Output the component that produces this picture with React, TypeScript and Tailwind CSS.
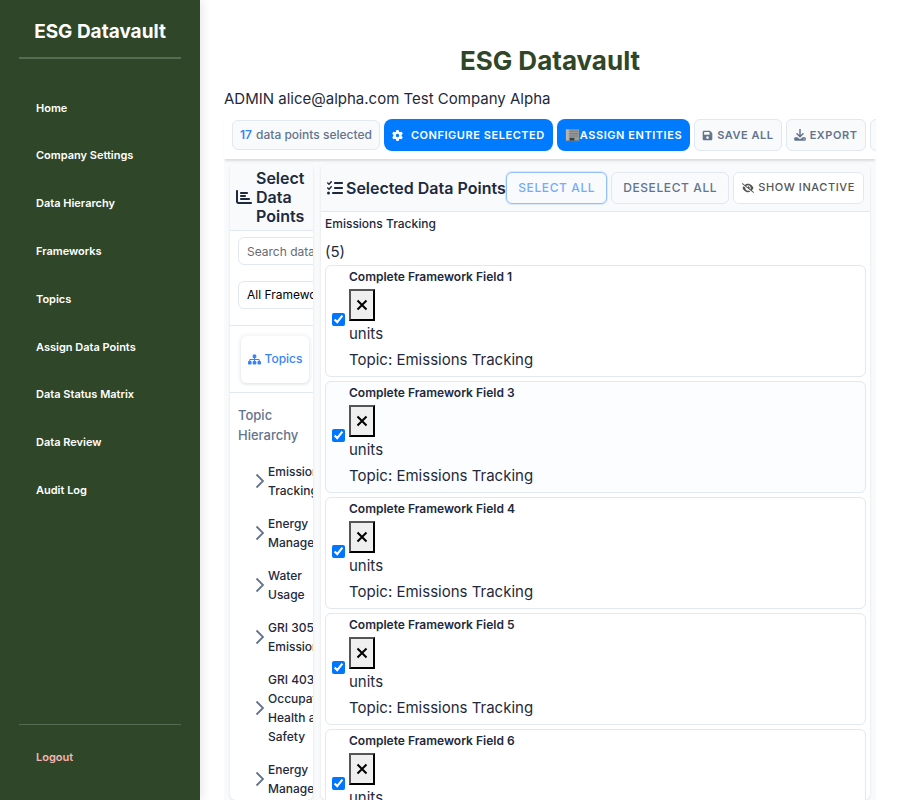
import type { ReactNode } from "react";
import {
  FaChartBar,
  FaEyeSlash,
  FaFloppyDisk,
  FaGear,
  FaListCheck,
  FaSitemap,
  FaUpload,
} from "react-icons/fa6";

const navItems = [
  "Home",
  "Company Settings",
  "Data Hierarchy",
  "Frameworks",
  "Topics",
  "Assign Data Points",
  "Data Status Matrix",
  "Data Review",
  "Audit Log",
];

const topics = [
  "Emissions Tracking",
  "Energy Management",
  "Water Usage",
  "GRI 305: Emissions",
  "GRI 403: Occupational Health and Safety",
  "Energy Management",
];

const fields = [1, 3, 4, 5, 6];

function Sidebar() {
  return (
    <aside className="flex w-[200px] shrink-0 flex-col bg-[#2f4728] px-[19px] text-[11px] font-semibold text-white shadow-[2px_0_10px_rgba(0,0,0,0.1)]">
      <div className="flex h-[59px] items-center justify-center border-b-2 border-white/20 pt-[6px] text-[19px] leading-6 font-bold">
        ESG Datavault
      </div>
      <nav className="flex h-[455px] flex-col pt-[25px]">
        {navItems.map((item) => (
          <a key={item} href="#" className="flex flex-1 items-center pl-[17px]">
            {item}
          </a>
        ))}
      </nav>
      <div className="mt-auto border-t border-white/20 pb-[19px]">
        <a href="#" className="mt-2 flex h-12 items-center pl-[17px] text-[#f8b4b4]">
          Logout
        </a>
      </div>
    </aside>
  );
}

function GhostButton({ icon, children }: { icon: ReactNode; children: ReactNode }) {
  return (
    <button className="flex h-8 shrink-0 items-center gap-1 rounded-md border border-[#e2e8f0] bg-[#f8fafc] px-[7px] text-[11px] font-semibold tracking-wider text-[#64748b] uppercase">
      {icon}
      {children}
    </button>
  );
}

function DownloadIcon() {
  return (
    <svg width="12" height="12" viewBox="0 0 12 12" aria-hidden="true">
      <path d="M6 .5v7M3 4.800 6 7.800l3-3" fill="none" stroke="currentColor" strokeWidth="1.500" strokeLinecap="round" />
      <path
        d="M1.500 8.200h1.800L6 10.200l2.700-2h1.800c.8 0 1.300.5 1.300 1.200v1c0 .8-.5 1.300-1.300 1.300h-9C.7 11.700.2 11.200.2 10.400v-1c0-.7.5-1.200 1.300-1.200z"
        fill="currentColor"
      />
      <circle cx="10" cy="10" r=".6" fill="#f8fafc" />
    </svg>
  );
}

function BuildingIcon() {
  return (
    <svg width="15" height="14" viewBox="0 0 16 14" aria-hidden="true">
      <path d="M1 1h14v12H1z" fill="#9a9a98" />
      <path d="M1 1h3v12H1z" fill="#b9b5ae" />
      <path d="M5 3h9M5 5.500h9M5 8h9" stroke="#74818c" strokeWidth="1.200" />
      <path d="M5 10h5v3H5z" fill="#3c3f42" />
      <path d="M0 13h16v1H0z" fill="#77706a" />
    </svg>
  );
}

function Toolbar() {
  return (
    <div className="relative z-10 shrink-0 bg-white shadow-[0_3px_2px_-1px_rgba(0,0,0,0.12)]">
      <div className="flex h-12 items-center gap-1 overflow-hidden pl-2">
        <div className="flex h-[30px] shrink-0 items-center gap-1 rounded-md border border-[#e2e8f0] bg-[#f8fafc] px-[7px] text-xs font-medium text-[#64748b]">
          <strong className="font-semibold text-[#3b82f6]">17</strong> data points selected
        </div>
        <button className="flex h-8 shrink-0 items-center gap-2 rounded-lg bg-[#007bff] px-2 text-[11px] font-semibold tracking-wider text-white uppercase">
          <FaGear size={11} />
          Configure Selected
        </button>
        <button className="flex h-8 shrink-0 items-center rounded-lg bg-[#007bff] px-2 text-[11px] font-semibold tracking-wider text-white uppercase">
          <BuildingIcon />
          Assign Entities
        </button>
        <GhostButton icon={<FaFloppyDisk size={11} />}>Save All</GhostButton>
        <GhostButton icon={<DownloadIcon />}>Export</GhostButton>
        <button
          aria-label="Import"
          className="flex h-8 shrink-0 items-center rounded-md border border-[#e2e8f0] bg-[#f8fafc] px-2 text-[#64748b]"
        >
          <FaUpload size={12} />
        </button>
      </div>
    </div>
  );
}

function SelectPanel() {
  return (
    <section className="flex w-[83px] shrink-0 flex-col overflow-hidden rounded-md bg-white shadow-[0_1px_3px_rgba(0,0,0,0.1)]">
      <h2 className="flex h-[67px] shrink-0 items-center gap-1 border-b border-[#e2e8f0] bg-[#f8fafc] pl-[6px] text-base leading-[19px] font-semibold">
        <FaChartBar size={16} className="shrink-0" />
        Select Data Points
      </h2>
      <div className="flex shrink-0 flex-col gap-4 border-b border-[#e2e8f0] pt-[6px] pb-4 pl-2">
        <input
          aria-label="Search data points"
          placeholder="Search data points..."
          className="h-7 w-[140px] rounded-md border border-[#e2e8f0] px-2 text-xs text-[#1e293b] placeholder:text-[#666b73]"
        />
        <select
          aria-label="Framework"
          className="h-7 w-[140px] appearance-none rounded-md border border-[#e2e8f0] bg-white px-2 text-xs text-black"
        >
          <option>All Frameworks</option>
        </select>
      </div>
      <div className="flex h-[67px] shrink-0 items-center border-b border-[#e2e8f0] pl-2">
        <div className="rounded-lg bg-[#f8fafc] p-[3px]">
          <button className="flex h-[47px] w-[68px] items-center justify-center gap-1 rounded-md bg-white text-xs font-medium text-[#3b82f6] shadow-[0_1px_3px_rgba(0,0,0,0.1)]">
            <FaSitemap size={13} />
            Topics
          </button>
        </div>
      </div>
      <h3 className="pt-3 pl-2 text-[13px] leading-5 font-medium text-[#64748b]">Topic Hierarchy</h3>
      <ul className="flex flex-col gap-[14px] pt-[17px] pl-[25px]">
        {topics.map((topic, i) => (
          <li key={i} className="flex items-center gap-[3px] text-xs leading-[19px] font-medium">
            <svg width="10" height="16" viewBox="0 0 10 16" className="shrink-0" aria-hidden="true">
              <path d="M1.500 1.500 8 8l-6.500 6.500" fill="none" stroke="#64748b" strokeWidth="1.800" />
            </svg>
            <span className="w-[68px] shrink-0">{topic}</span>
          </li>
        ))}
      </ul>
    </section>
  );
}

function FieldCard({ field, shaded }: { field: number; shaded: boolean }) {
  const id = `field-${field}`;
  return (
    <li
      className={`flex h-[112px] shrink-0 items-center gap-1 rounded-md border border-[#e2e8f0] px-[6px] ${
        shaded ? "bg-[#fbfdff]" : "bg-white"
      }`}
    >
      <input id={id} type="checkbox" defaultChecked className="mb-[3px] size-[13px] shrink-0 accent-[#0075ff]" />
      <div className="flex flex-col items-start self-start pt-[1px]">
        <label htmlFor={id} className="text-xs leading-5 font-semibold">
          Complete Framework Field {field}
        </label>
        <button
          aria-label={`Remove field ${field}`}
          className="mt-[2px] flex h-8 w-[26px] items-center justify-center border-2 border-t-[#555] border-r-black border-b-black border-l-[#555] bg-[#efefef] text-black"
        >
          <svg width="12" height="12" viewBox="0 0 12 12" aria-hidden="true">
            <path d="m1.500 1.500 9 9m0-9-9 9" stroke="currentColor" strokeWidth="2" />
          </svg>
        </button>
        <div className="text-[15px] leading-[26px]">units</div>
        <div className="text-[15px] leading-[26px]">Topic: Emissions Tracking</div>
      </div>
    </li>
  );
}

function SelectedPanel() {
  return (
    <section className="flex min-w-0 flex-1 flex-col overflow-hidden rounded-md bg-white shadow-[0_1px_3px_rgba(0,0,0,0.1)]">
      <header className="flex h-12 shrink-0 items-center border-b border-[#e2e8f0] bg-[#f8fafc] px-[6px]">
        <h2 className="flex shrink-0 items-center gap-[3px] text-base font-semibold">
          <FaListCheck size={16} />
          Selected Data Points
        </h2>
        <div className="ml-auto flex gap-1 text-xs font-medium tracking-wider whitespace-nowrap text-[#64748b]">
          <button className="h-8 rounded-md border border-[#93c0fd] bg-[#f8fafc] px-[11px] text-[#75abf9] uppercase shadow-[0_0_0_1px_rgba(147,192,253,0.3)]">
            Select All
          </button>
          <button className="h-8 rounded-md border border-[#e2e8f0] px-[11px] uppercase">Deselect All</button>
          <button className="flex h-8 items-center gap-1 rounded-md border border-[#e2e8f0] bg-white px-2 text-[11px] text-[#555] uppercase">
            <FaEyeSlash size={12} />
            Show Inactive
          </button>
        </div>
      </header>
      <div className="px-1">
        <h3 className="pt-[2px] text-xs leading-5 font-medium">Emissions Tracking</h3>
        <div className="pt-1 text-[15px] leading-[27px]">(5)</div>
        <ul className="flex flex-col gap-1">
          {fields.map((field, i) => (
            <FieldCard key={field} field={field} shaded={i === 1} />
          ))}
        </ul>
      </div>
    </section>
  );
}

export default function App() {
  return (
    <div className="flex h-screen overflow-hidden bg-white font-[Inter,'Liberation_Sans',sans-serif] text-[#1e293b]">
      <Sidebar />
      <main className="flex min-w-0 flex-1 flex-col px-6">
        <h1 className="shrink-0 pt-11 text-center text-[26px] leading-[34px] font-bold text-[#2f4728]">
          ESG Datavault
        </h1>
        <div className="shrink-0 pt-2 text-[15px] leading-[25px]">
          ADMIN alice@alpha.com Test Company Alpha
        </div>
        <Toolbar />
        <div className="flex min-h-0 flex-1 gap-2 overflow-hidden bg-[#f8fafc] px-[6px] pt-[5px]">
          <SelectPanel />
          <SelectedPanel />
        </div>
      </main>
    </div>
  );
}
